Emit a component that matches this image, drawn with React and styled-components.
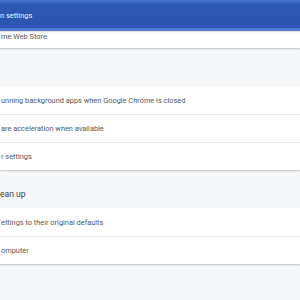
import React from "react";
import styled, { createGlobalStyle } from "styled-components";

const Global = createGlobalStyle`
  html, body { margin: 0; padding: 0; }
  body {
    width: 300px;
    height: 300px;
    overflow: hidden;
    background: #f6f7f9;
    font-family: Roboto, "Liberation Sans", Arial, sans-serif;
  }
`;

const Page = styled.div`
  display: flex;
  flex-direction: column;
  width: 300px;
  height: 300px;
  background: #f6f7f9;
`;

const TopBar = styled.div`
  height: 31px;
  box-sizing: border-box;
  display: flex;
  align-items: center;
  padding-top: 2px;
  background: linear-gradient(#4a76d3 0px, #3561c2 3px, #2c57b2 5px, #2b55b0 100%);
  border-bottom: 3px solid #5079d0;
  color: #f2f5fc;
  font-size: 7.4px;
  box-shadow: 0 1px 1px rgba(0, 0, 0, 0.12);
  position: relative;
  z-index: 1;
`;

const Card = styled.div`
  background: #ffffff;
  box-shadow: 0 1px 1.5px rgba(60, 64, 67, 0.3);
  display: flex;
  flex-direction: column;
  margin-top: ${(p) => p.$mt || 0}px;
`;

const Row = styled.div`
  height: ${(p) => p.$h || 28}px;
  display: flex;
  align-items: ${(p) => (p.$top ? "flex-start" : "center")};
  padding-top: ${(p) => (p.$top ? 1 : 0)}px;
  padding-left: 1px;
  font-size: 7.4px;
  color: #55585c;
  white-space: nowrap;
  border-top: ${(p) => (p.$first ? "none" : "1px solid #ececee")};
  box-sizing: border-box;
`;

const SectionTitle = styled.div`
  height: 38px;
  display: flex;
  align-items: center;
  padding-top: 10px;
  box-sizing: border-box;
  font-size: 8.6px;
  color: #3b3e42;
  white-space: nowrap;
`;

export default function App() {
  return (
    <Page>
      <Global />
      <TopBar>n settings</TopBar>
      <Card>
        <Row $first $top $h={17}>me Web Store</Row>
      </Card>
      <Card $mt={38}>
        <Row $first>unning background apps when Google Chrome is closed</Row>
        <Row>are acceleration when available</Row>
        <Row>r settings</Row>
      </Card>
      <SectionTitle>ean up</SectionTitle>
      <Card>
        <Row $first>ettings to their original defaults</Row>
        <Row>omputer</Row>
      </Card>
    </Page>
  );
}
